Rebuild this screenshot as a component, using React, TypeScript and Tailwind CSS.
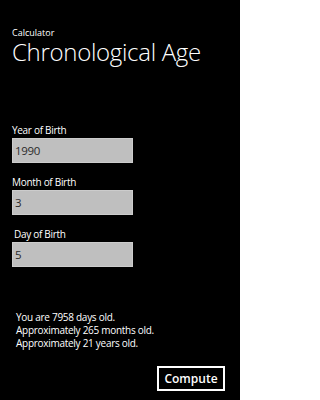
import React, { useState } from "react";

const Field = ({ label, value, indent }: { label: string; value: string; indent?: boolean }) => (
    <div className="flex flex-col">
        <label className={`text-[10px] leading-[13px] tracking-[-0.3px] text-white ${indent ? "pl-[2px]" : ""}`}>{label}</label>
        <div className="mt-[1px] w-[121px] h-[25px] bg-[#bfbfbf] border border-[#cccccc] flex items-center px-[2px]">
            <span className="text-[11.5px] text-[#2b2b2b] tracking-[-0.3px]">{value}</span>
        </div>
    </div>
);

export default function App() {
    const [year] = useState("1990");
    const [month] = useState("3");
    const [day] = useState("5");

    return (
        <div
            className="w-[240px] h-[400px] bg-black text-white flex flex-col overflow-hidden"
            style={{ fontFamily: '"Open Sans", "Noto Sans", sans-serif' }}
        >
            <div className="pl-[12px] pt-[27px]">
                <div className="text-[9px] leading-[11px]">Calculator</div>
                <div className="text-[24px] leading-[28px] font-light tracking-[-0.3px]">Chronological Age</div>
            </div>

            <div className="pl-[12px] pt-[58px] flex flex-col gap-[13px]">
                <Field label="Year of Birth" value={year} />
                <Field label="Month of Birth" value={month} />
                <Field label="Day of Birth" value={day} indent />
            </div>

            <div className="pl-[16px] pt-[44px] text-[10px] leading-[13px] tracking-[-0.28px]">
                <div>You are 7958 days old.</div>
                <div>Approximately 265 months old.</div>
                <div>Approximately 21 years old.</div>
            </div>

            <div className="flex justify-end pr-[15px] pt-[16px]">
                <button className="w-[68px] h-[25px] border-2 border-white text-[12px] font-semibold flex items-center justify-center">
                    Compute
                </button>
            </div>
        </div>
    );
}
